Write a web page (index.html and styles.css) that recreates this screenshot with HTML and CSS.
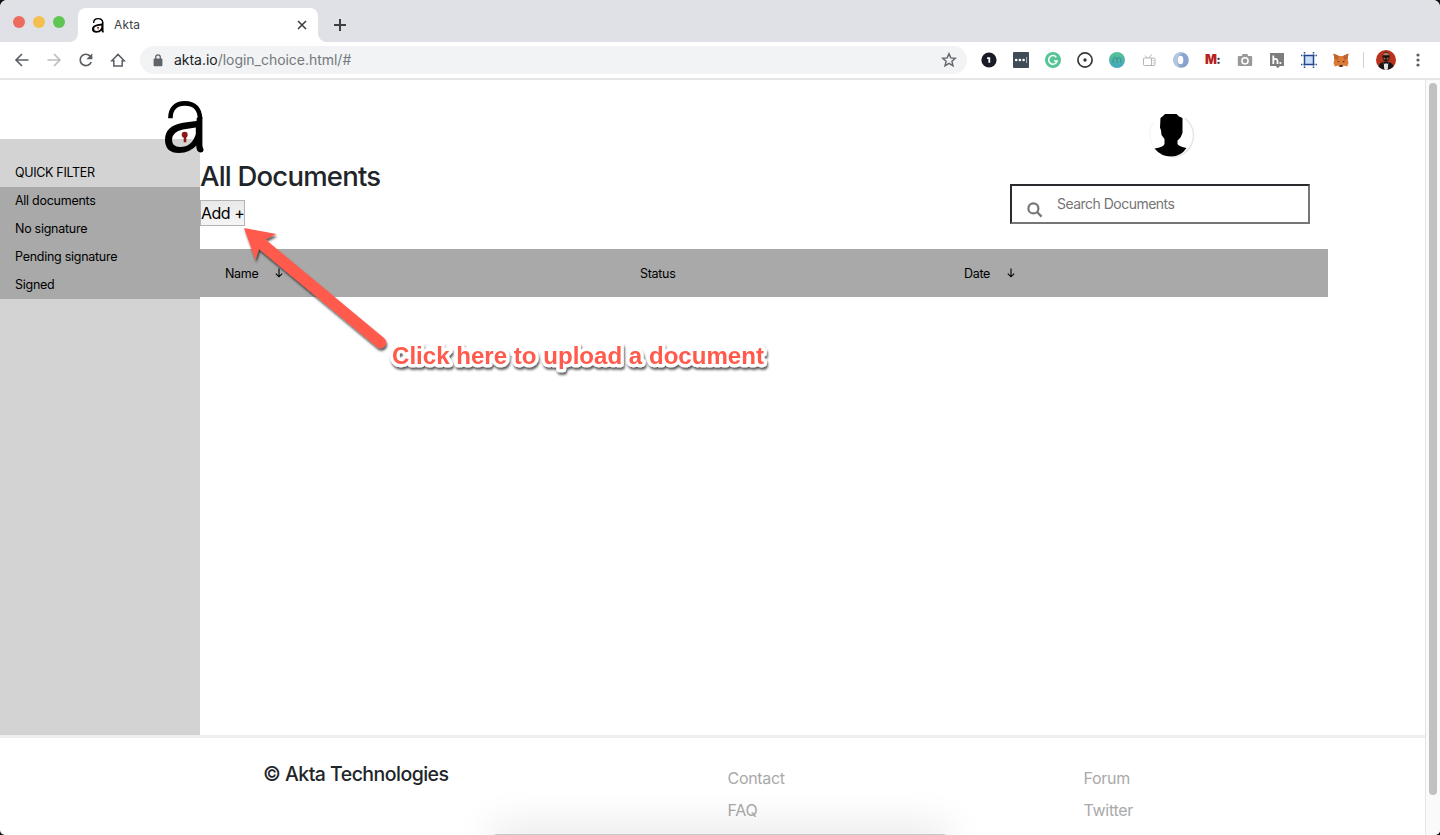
FILE: index.html
```html
<!DOCTYPE html>
<html lang="en">
<head>
<meta charset="utf-8">
<title>Akta</title>
<link rel="stylesheet" href="styles.css">
</head>
<body>
<div class="browser">
  <div class="tabstrip">
    <div class="lights"><i class="light red"></i><i class="light amber"></i><i class="light green"></i></div>
    <div class="tab">
      <svg class="favicon" width="12" height="15" viewBox="0 0 39 53" preserveAspectRatio="none"><use href="#akta"/></svg>
      <span class="tab-title">Akta</span>
      <svg class="tab-close" width="10" height="10" viewBox="0 0 10 10"><path d="M1 1l8 8M9 1l-8 8" stroke="#3c4043" stroke-width="1.6"/></svg>
    </div>
    <svg class="new-tab" width="12" height="12" viewBox="0 0 12 12"><path d="M6 0v12M0 6h12" stroke="#3c4043" stroke-width="2"/></svg>
  </div>
  <div class="toolbar">
    <div class="nav">
      <svg width="16" height="16" viewBox="0 0 16 16" fill="none" stroke="#5a5e63" stroke-width="1.6"><path d="M14.500 8H2.200M8 2L2 8l6 6"/></svg>
      <svg width="16" height="16" viewBox="0 0 16 16" fill="none" stroke="#babcbe" stroke-width="1.6"><path d="M1.500 8h12.300M8 2l6 6-6 6"/></svg>
      <svg width="16" height="16" viewBox="0 0 16 16"><path d="M13.2 10A5.7 5.7 0 1 1 12.2 4.2" fill="none" stroke="#5a5e63" stroke-width="1.7"/><path d="M14.3 1.3v5.9H8.4z" fill="#5a5e63"/></svg>
      <svg width="16" height="16" viewBox="0 0 16 16" fill="none" stroke="#5a5e63" stroke-width="1.5"><path d="M1.800 8.800L8 2.400l6.200 6.400h-2v5.200H3.800V8.800z"/></svg>
    </div>
    <div class="omnibox">
      <svg width="10" height="13" viewBox="0 0 10 13"><rect x="0.6" y="4.6" width="8.8" height="7.6" rx="1" fill="#5f6368"/><path d="M2.7 5V3.2a2.3 2.3 0 0 1 4.6 0V5" fill="none" stroke="#5f6368" stroke-width="1.3"/></svg>
      <span class="url"><b>akta.io</b>/login_choice.html/#</span>
      <svg class="star" width="16" height="16" viewBox="0 0 16 16"><path d="M8 1.7l1.8 4.2 4.6.4-3.5 3 1.1 4.5L8 11.4l-4 2.4 1.1-4.5-3.5-3 4.6-.4z" fill="none" stroke="#5f6368" stroke-width="1.4"/></svg>
    </div>
    <div class="extensions">
      <svg width="16" height="16" viewBox="0 0 16 16"><circle cx="8" cy="8" r="7.6" fill="#191c27"/><path d="M6.1 5.2h3.1v5.6H7.4V7H6.1z" fill="#fff"/></svg>
      <svg width="16" height="16" viewBox="0 0 16 16"><rect width="16" height="16" rx="1" fill="#3f4c57"/><circle cx="3.2" cy="8" r="1.3" fill="#fff"/><circle cx="6.9" cy="8" r="1.3" fill="#fff"/><circle cx="10.6" cy="8" r="1.3" fill="#fff"/><path d="M13.6 5v6" stroke="#aab2b8"/></svg>
      <svg width="16" height="16" viewBox="0 0 16 16"><circle cx="8" cy="8" r="8" fill="#55c497"/><path d="M11.300 5.200A4.300 4.300 0 1 0 12.100 9H9" fill="none" stroke="#fff" stroke-width="1.5"/></svg>
      <svg width="16" height="16" viewBox="0 0 16 16"><circle cx="8" cy="8" r="7.1" fill="#fff" stroke="#373737" stroke-width="1.7"/><circle cx="8" cy="8" r="1.7" fill="#373737"/></svg>
      <svg width="16" height="16" viewBox="0 0 16 16"><defs><linearGradient id="teal" x2="0" y2="1"><stop stop-color="#57c391"/><stop offset="1" stop-color="#43a8c2"/></linearGradient></defs><circle cx="8" cy="8" r="8" fill="url(#teal)"/><path d="M4.2 11V7.4q0-1.7 1.9-1.7T8 7.4V11M8 7.4q0-1.7 1.9-1.7t1.9 1.7V11" fill="none" stroke="#3e8f8f"/></svg>
      <svg width="16" height="16" viewBox="0 0 16 16" fill="none" stroke="#b5b5b5"><rect x="2.500" y="6" width="11.500" height="7.500" rx="1"/><path d="M10.500 6v7M4 3.500l2 2.300M11 2.500L7.500 5.800M12.200 8v1M12.200 10.500v1"/></svg>
      <svg width="16" height="16" viewBox="0 0 16 16"><circle cx="8" cy="8" r="7.8" fill="#8aa5cd"/><path d="M8 .3A7.7 7.7 0 0 0 8 15.7 5.5 6 0 0 1 5 8Q5 2.5 9.5 1.3z" fill="#b4c7df"/><path d="M8.500 15.500Q14 14 14.800 8.500A7.600 7.600 0 0 1 8.500 15.500z" fill="#48699f"/><ellipse cx="7.600" cy="8" rx="2.700" ry="4.300" fill="#fff"/></svg>
      <span class="ext-m">M<small>:</small></span>
      <svg width="16" height="16" viewBox="0 0 16 16"><path d="M1.8 4h2.9l1-2h4.6l1 2h2.9q1 0 1 1v8q0 1-1 1H1.8q-1 0-1-1V5q0-1 1-1z" fill="#999"/><circle cx="8" cy="8.8" r="3.1" fill="#999" stroke="#fff" stroke-width="1.5"/></svg>
      <svg width="16" height="16" viewBox="0 0 16 16"><path d="M1 1h14v13h-4l-2.2 2.2L6.8 14H1z" fill="#7d7d7d"/><path d="M4.3 3.5V12M4.3 8.4q1-1.8 2.6-1.6T8.5 9v3" fill="none" stroke="#fff" stroke-width="1.8"/><circle cx="11.4" cy="11" r="1.1" fill="#fff"/></svg>
      <svg width="16" height="16" viewBox="0 0 16 16"><rect x="3" y="3" width="10" height="10" fill="#c8def7"/><path d="M3.500 3v10M12.500 3v10M3 3.500h10M3 12.500h10" stroke="#24468f" stroke-width="1.5"/><path d="M3.500 0v2.500M12.500 0v2.500M3.500 13.500V16M12.500 13.500V16M0 3.500h2.500M0 12.500h2.500M13.500 3.500H16M13.500 12.500H16" stroke="#24468f" stroke-width="1.5" stroke-dasharray="1 .6"/></svg>
      <svg width="16" height="16" viewBox="0 0 16 16"><path d="M.5 1.5L6 4h4l5.5-2.5-.9 5.5.9 3.7-1.3 3.8-3.4-1L9.6 15H6.4l-1.2-1.5-3.4 1L.5 10.7 1.4 7z" fill="#dd7b35"/><path d="M6 4L4.6 8.6 1.4 7 .5 1.5zM10 4l1.4 4.6L14.6 7l.9-5.5z" fill="#bd6435"/><path d="M4 9.1l2.4.2-.5 1.3zM12 9.1l-2.4.2.5 1.3zM6.6 13h2.8v1.7H6.6z" fill="#2b3038"/></svg>
    </div>
    <i class="divider"></i>
    <svg class="profile" width="20" height="20" viewBox="0 0 20 20"><defs><clipPath id="round"><circle cx="10" cy="10" r="10"/></clipPath></defs><g clip-path="url(#round)"><rect width="20" height="20" fill="#b8321c"/><path d="M2 20q0-7 5-8h6q5 1 5 8z" fill="#17171a"/><ellipse cx="10" cy="7" rx="3.500" ry="5" fill="#2c1a17"/><path d="M7.200 4q2.800-2.400 5.600 0v1.600H7.200z" fill="#b07d68"/><path d="M6.800 5.600h6.400v1.600H6.800z" fill="#111"/><path d="M7.600 7.800h1.600v1.600H7.600zM10.800 7.800h1.600v1.600h-1.600z" fill="#9a6652"/><path d="M7.700 12.500l2.300 1 2.300-1-.6 7.500H8.300z" fill="#e8e4df"/><path d="M8 12l2 1 2-1v2l-2-1-2 1z" fill="#111"/></g></svg>
    <svg class="kebab" width="4" height="14" viewBox="0 0 4 14" fill="#5a5e63"><circle cx="2" cy="2" r="1.6"/><circle cx="2" cy="7" r="1.6"/><circle cx="2" cy="12" r="1.6"/></svg>
  </div>
  <div class="viewport">
    <div class="page">
      <div class="workspace">
        <aside class="sidebar">
          <h2 class="filter-title">QUICK FILTER</h2>
          <ul class="filters"><li>All documents</li><li>No signature</li><li>Pending signature</li><li>Signed</li></ul>
        </aside>
        <main class="main">
          <div class="head">
            <div class="heading"><h1>All Documents</h1><button class="add">Add +</button></div>
            <div class="tools">
              <svg class="avatar" width="48" height="48" viewBox="0 0 48 48"><path d="M37.500 7A21.500 21.500 0 0 1 25 46" fill="none" stroke="#e6e6e6" stroke-width="1.5"/><path d="M6 12A21.500 21.500 0 0 0 7 36" fill="none" stroke="#f3f3f3"/><path d="M18 3h11.500l2.500 2.500 3.500 1.500V22l-2 4.500-3 3v3.500q1.500 2.500 9 4Q34 45.500 24 45.500T7.500 37.500Q16.500 36 17.500 33V28l-3-4-.5-4.500-1-3 .5-9.500L16 5z" fill="#000"/></svg>
              <div class="search">
                <svg width="16" height="16" viewBox="0 0 16 16" fill="none" stroke="#777"><circle cx="6.400" cy="6.400" r="5" stroke-width="2.200"/><path d="M10 10l4.600 4.600" stroke-width="2.300"/></svg>
                <span>Search Documents</span>
              </div>
            </div>
          </div>
          <div class="table-head">
            <span>Name <svg class="down" width="8" height="10" viewBox="0 0 8 10"><path d="M4 .5v8M.8 5.600L4 8.800l3.200-3.200" fill="none" stroke="#000" stroke-width="1.100"/></svg></span>
            <span>Status</span>
            <span>Date <svg class="down" width="8" height="10" viewBox="0 0 8 10"><path d="M4 .5v8M.8 5.600L4 8.800l3.200-3.200" fill="none" stroke="#000" stroke-width="1.100"/></svg></span>
          </div>
        </main>
        <svg class="logo" width="39" height="53" viewBox="0 0 39 53">
          <g id="akta">
            <path d="M5.400 17.300C5.400 7.500 11 2.400 19.800 2.400C29.500 2.400 35 8 35 18" fill="none" stroke="#000" stroke-width="4.600"/>
            <path d="M31.700 17Q34.500 15 37.400 16V44Q37.400 46.500 38.600 48.500Q38.500 51.500 35.500 51.500Q31.700 51.500 31.200 45z"/>
            <path fill-rule="evenodd" d="M33 19.700L18 21.800Q0 25 0 38.500Q0 52 14 52Q25 52 33 43zM30.800 26.500L18 28.500Q7 31 7 38.500Q7 46 15 46Q27 46 30.800 33z"/>
            <circle cx="19.700" cy="33.700" r="3" fill="#8b1a16"/><path d="M20 34v7.200" stroke="#8b1a16" stroke-width="2.600"/>
          </g>
        </svg>
      </div>
      <footer class="footer">
        <h3 class="company">© Akta Technologies</h3>
        <ul class="links"><li>Contact</li><li>FAQ</li></ul>
        <ul class="links"><li>Forum</li><li>Twitter</li></ul>
      </footer>
    </div>
    <div class="scrollbar"><i class="thumb"></i></div>
  </div>
  <div class="dock-shadow"></div>
  <svg class="callout" width="560" height="170" viewBox="230 215 560 170">
    <defs>
      <filter id="shade" x="-10%" y="-10%" width="120%" height="140%"><feDropShadow dx="1" dy="2.500" stdDeviation="1.200" flood-color="#000" flood-opacity=".65"/></filter>
    </defs>
    <path d="M244 228L276.500 234 265.500 239.500 384 338A5.600 5.600 0 0 1 377 347L259 249 255.500 260z" fill="#ff5a4b" filter="url(#shade)"/>
    <text class="callout-text" x="392" y="364" textLength="372" lengthAdjust="spacingAndGlyphs" filter="url(#shade)">Click here to upload a document</text>
  </svg>
</div>
</body>
</html>
```
FILE: styles.css
```css
* { box-sizing: border-box; }
body { margin: 0; background: #111; font-family: Inter, "Liberation Sans", sans-serif; }
h1, h2, h3, ul { margin: 0; padding: 0; list-style: none; }
svg { display: block; flex: none; }
.browser { position: relative; width: 1440px; height: 835px; display: flex; flex-direction: column; overflow: hidden; border-radius: 7px 7px 5px 5px; background: #fff; }

.tabstrip { height: 42px; flex: none; display: flex; align-items: flex-end; background: #dfe1e6; }
.lights { display: flex; gap: 8px; padding: 0 13px 14px 13px; }
.light { width: 12px; height: 12px; border-radius: 50%; }
.red { background: #ed6a5e; }
.amber { background: #f5bf4f; }
.green { background: #61c554; }
.tab { position: relative; width: 240px; height: 34px; display: flex; align-items: center; background: #fff; border-radius: 8px 8px 0 0; padding: 0 11px 0 14px; }
.tab::before, .tab::after { content: ""; position: absolute; bottom: 0; width: 8px; height: 8px; }
.tab::before { left: -8px; background: radial-gradient(circle at 0 0, transparent 7.5px, #fff 8px); }
.tab::after { right: -8px; background: radial-gradient(circle at 100% 0, transparent 7.5px, #fff 8px); }
.tab-title { margin-left: 10px; font-size: 12px; line-height: 14px; padding-bottom: 1px; color: #3c4043; letter-spacing: .15px; }
.tab-close { margin-left: auto; }
.new-tab { margin: 0 0 11px 16px; }

.toolbar { height: 38px; flex: none; display: flex; align-items: center; background: #fff; border-bottom: 2px solid #e6e6e6; padding-left: 14px; }
.nav { display: flex; gap: 16px; margin-right: 14px; }
.omnibox { width: 827px; height: 28px; border-radius: 14px; background: #f1f3f4; display: flex; align-items: center; padding: 0 10px 0 13px; }
.url { margin-left: 11px; padding-bottom: 1px; font-size: 14px; line-height: 17px; color: #75797d; letter-spacing: -.03px; white-space: nowrap; }
.url b { color: #202124; font-weight: 400; }
.star { margin-left: auto; }
.extensions { display: flex; align-items: center; gap: 16px; margin-left: 14px; }
.ext-m { width: 16px; font: 900 12.500px/16px Inter, sans-serif; color: #b81f1f; letter-spacing: -.8px; white-space: nowrap; }
.ext-m small { font-size: 12px; color: #333; }
.divider { width: 1px; height: 16px; background: #cfd1d4; margin: 0 12px 0 14px; }
.kebab { margin-left: 20px; }

.viewport { flex: 1; min-height: 0; display: flex; }
.page { width: 1425px; display: flex; flex-direction: column; }
.workspace { position: relative; height: 655px; flex: none; display: flex; }
.sidebar { width: 200px; margin-top: 59px; background: #d3d3d3; color: #000; }
.filter-title { height: 48px; padding: 20px 15px 0; font-size: 12.500px; line-height: 28px; font-weight: 400; letter-spacing: -.32px; }
.filters { background: #a9a9a9; }
.filters li { height: 28px; padding-left: 15px; font-size: 12.500px; line-height: 28px; letter-spacing: -.27px; }
.main { width: 1128px; }
.head { height: 169px; display: flex; justify-content: space-between; }
.heading { padding-top: 79px; }
.heading h1 { font-size: 27.500px; line-height: 34px; font-weight: 500; letter-spacing: -.8px; color: #212529; white-space: nowrap; }
.add { display: block; margin-top: 7px; width: 45px; height: 26px; padding: 0; border: 1px solid #b4b4b4; background: linear-gradient(#e9e9e9, #f5f5f5); font: 16px/24px Inter, sans-serif; letter-spacing: -.5px; white-space: nowrap; color: #000; }
.tools { width: 300px; margin-right: 18px; padding-top: 31px; }
.avatar { margin-left: 137px; }
.search { margin-top: 25px; height: 40px; display: flex; border: 2px solid; border-color: #2b2b2f #767676 #767676 #2b2b2f; background: #fff; }
.search svg { margin: 16px 0 0 15px; }
.search span { margin-left: 14px; font-size: 14px; line-height: 36px; color: #757575; letter-spacing: -.52px; }
.table-head { height: 48px; display: grid; grid-template-columns: 415px 324px 1fr; padding: 0 0 0 25px; align-items: center; background: #a9a9a9; font-size: 12.500px; letter-spacing: -.3px; }
.table-head span { display: flex; align-items: center; }
.down { margin-left: 17px; }
.logo { position: absolute; left: 165px; top: 21px; }

.footer { flex: 1; border-top: 3px solid #eee; display: grid; grid-template-columns: 464.500px 356px 1fr; padding-left: 263px; }
.company { padding-top: 24px; font-size: 19.500px; line-height: 24px; font-weight: 500; letter-spacing: -.53px; color: #212529; }
.links { padding-top: 24px; font-size: 16px; line-height: 32px; color: #a9a9a9; letter-spacing: -.3px; }

.scrollbar { width: 15px; background: #fafafa; border-left: 1px solid #e5e5e5; padding: 3px 0 0 3px; }
.thumb { display: block; width: 8px; height: 712px; border-radius: 4px; background: #c1c1c1; }
.dock-shadow { position: absolute; left: 492px; bottom: -9px; width: 456px; height: 10px; border-radius: 10px; background: #c8c8c8; box-shadow: 0 0 40px 2px rgba(0, 0, 0, .2); }
.callout { position: absolute; left: 230px; top: 215px; }
.callout-text { font: 700 24.500px "Liberation Sans", Arial, sans-serif; fill: #ff5a4b; stroke: #fff; stroke-width: 6.500px; stroke-linejoin: round; paint-order: stroke; }
```
